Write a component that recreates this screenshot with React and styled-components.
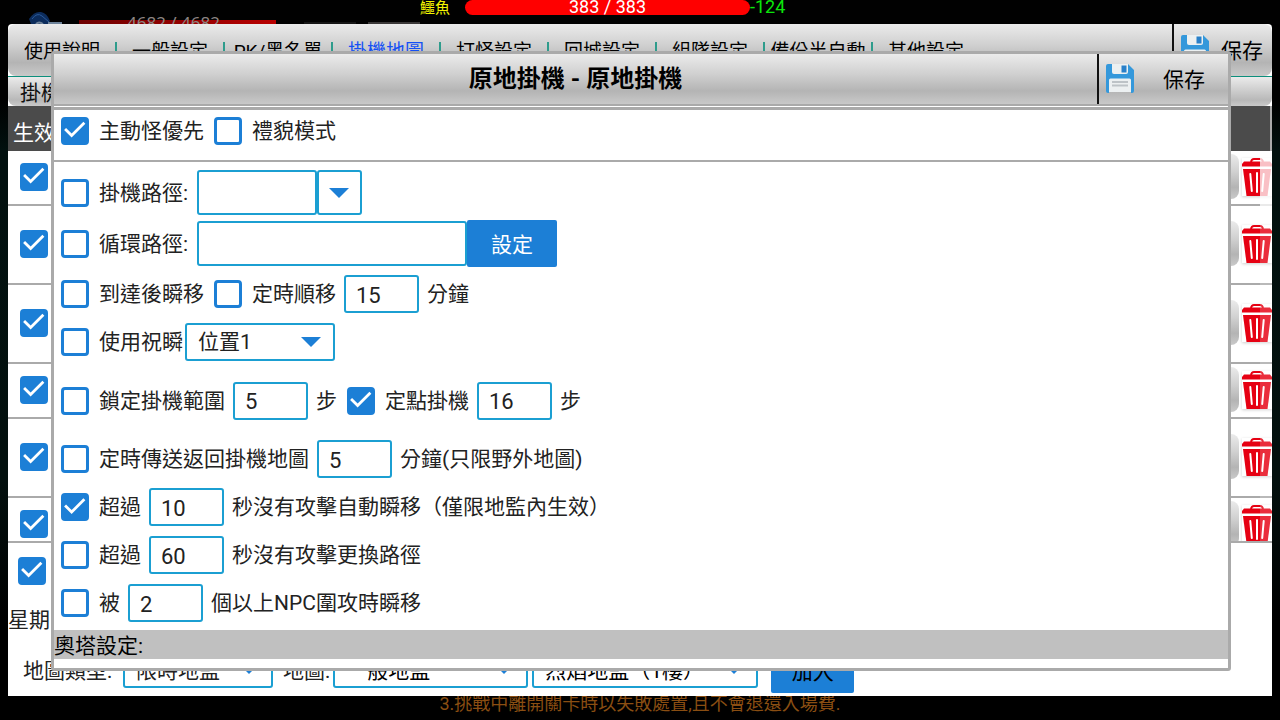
import React from "react";
import styled, { createGlobalStyle, css } from "styled-components";

const BLUE = "#1c7fd6";
const FIELD = "#1b9fd2";
const RULE = "#aaaaaa";
const METAL =
  "linear-gradient(180deg, #ebebeb 0%, #d0d0d0 40%, #b4b4b4 74%, #c9c9c9 100%)";

const GlobalStyle = createGlobalStyle`
  * { box-sizing: border-box; }
  body {
    margin: 0;
    background: #000;
    font-family: Roboto, "Noto Sans CJK TC", sans-serif;
    font-size: 21px;
    line-height: 28px;
    color: #222;
  }
  button, input, select { font: inherit; color: inherit; margin: 0; }
`;

const Page = styled.div`
  position: relative;
  min-height: 100vh;
  padding: 0 8px;
  overflow: hidden;
  background: linear-gradient(180deg, #000 100px, #02110f 150px, #03100e 480px, #000 620px);
`;

/* ---------- game HUD behind the window ---------- */
const Hud = styled.div`
  display: flex;
  height: 24px;
  margin: 0 -8px;
  padding-left: 28px;
  overflow: hidden;
  white-space: nowrap;
  background: #010101;
`;

const Crest = styled.svg`
  flex: none;
  width: 40px;
  height: 24px;
  margin-right: 11px;
`;

const PlayerGauge = styled.div`
  flex: none;
  width: 197px;
  height: 48px;
  padding-right: 8px;
  text-align: center;
  font: 17px/46px "Noto Sans", sans-serif;
  color: #8d8583;
  background: linear-gradient(90deg, #6e0000, #b80000) 0 20px no-repeat;
`;

const HudSlot = styled.div`
  flex: none;
  width: 52px;
  height: 2px;
  margin: 22px 0 0 ${(p) => p.$gap}px;
  background: ${(p) => p.$tone};
`;

const FoeName = styled.div`
  flex: none;
  width: 45px;
  font-size: 15px;
  line-height: 16px;
  color: #f4f400;
`;

const FoeGauge = styled.div`
  flex: none;
  width: 285px;
  height: 15px;
  border-radius: 8px;
  background: #f00;
  color: #fff;
  font-size: 18px;
  line-height: 14px;
  text-align: center;
`;

const Damage = styled.div`
  font-size: 18px;
  line-height: 14px;
  color: #0be60b;
`;

const Hint = styled.p`
  margin: 0;
  text-align: center;
  white-space: nowrap;
  font-size: 18px;
  line-height: 16px;
  color: #8a4e12;
`;

/* ---------- settings window ---------- */
const Window = styled.main`
  position: relative;
  z-index: 1;
  background: #fff;
  border-radius: 4px 4px 0 0;
`;

const NavBar = styled.nav`
  display: flex;
  height: 52px;
  padding-left: 1px;
  background: ${METAL};
  border-radius: 8px;
`;

const Tab = styled.button`
  flex: none;
  width: 108px;
  padding: 0;
  border: 0;
  border-right: 2px solid ${(p) => (p.$last ? "transparent" : "#2f9c8c")};
  height: 20px;
  margin-top: 18px;
  background: none;
  font-size: 19px;
  line-height: 16px;
  white-space: nowrap;
  color: ${(p) => (p.$active ? "#1450f5" : "#000")};
`;

const SaveButton = styled.button`
  display: flex;
  align-items: center;
  flex: none;
  gap: ${(p) => p.$gap}px;
  width: ${(p) => p.$width}px;
  margin-left: auto;
  padding: 0 0 0 7px;
  border: 0;
  border-left: 2px solid #111;
  background: none;
  color: #000;

  span {
    padding-top: 2px;
  }
  svg {
    margin-bottom: 2px;
  }
`;

const SubBar = styled.div`
  height: 30px;
  padding: 2px 12px 0;
  border-top: 1px solid #0c8f7c;
  color: #111;
  background: linear-gradient(180deg, #ebebeb, #b8b8b8 80%, #c9c9c9);
  border-radius: 0 0 8px 8px;
`;

const ListViewport = styled.div`
  position: relative;
  height: 437px;
  overflow: hidden;
  border-bottom: 2px solid ${RULE};
`;

const List = styled.table`
  width: 100%;
  border-spacing: 0;
`;

const HeadCell = styled.th`
  height: 45px;
  padding: 8px 5px 0;
  background: #4b4b4b;
  border-right: ${(p) => (p.$last ? `2px solid ${RULE}` : "0")};
  color: #fff;
  font-weight: 400;
  text-align: left;
`;

const Cell = styled.td`
  height: ${(p) => p.$height}px;
  padding: 0 0 2px 12px;
  border-bottom: 2px solid ${RULE};
`;

const Actions = styled.div`
  display: flex;
  justify-content: flex-end;
  align-items: center;
  gap: 3px;
`;

const EditButton = styled.button`
  width: 80px;
  height: 45px;
  border: 0;
  border-radius: 8px;
  background: ${METAL};
`;

const DeleteButton = styled.button`
  display: block;
  width: 30px;
  height: 38px;
  padding: 0;
  border: 0;
  background: #fff;
  box-shadow: 0 1px 3px #ccc;
`;

const ScrollTrack = styled.div`
  position: absolute;
  top: 45px;
  right: 0;
  bottom: 0;
  width: 12px;
  background: rgba(255, 255, 255, 0.18);
`;

const ScrollThumb = styled.div`
  height: 55px;
  background: rgba(255, 255, 255, 0.7);
`;

const BottomRow = styled.div`
  display: flex;
  align-items: center;
  height: ${(p) => p.$height}px;
  padding-left: ${(p) => p.$indent || 0}px;
`;

/* ---------- form controls ---------- */
const Check = styled.input.attrs({ type: "checkbox" })`
  appearance: none;
  flex: none;
  display: block;
  width: 28px;
  height: 28px;
  border: 3px solid ${BLUE};
  border-radius: 4px;
  background: #fff;

  label + & {
    margin-left: 2px;
  }
  &:checked {
    background: ${BLUE};
  }
  &:checked::before {
    content: "";
    display: block;
    width: 28px;
    height: 28px;
    margin: -3px;
    background: #fff;
    clip-path: polygon(11% 48%, 18% 41%, 38% 61%, 80% 19%, 87% 26%, 38% 75%);
  }
`;

const CheckLabel = styled.label`
  margin: 0 ${(p) => (p.$tight ? 2 : 8)}px 0 10px;
  white-space: nowrap;
`;

const MapLabel = styled.span`
  padding-top: 4px;
  margin: 0 ${(p) => p.$after}px 0 10px;
  white-space: nowrap;
`;

const Note = styled.span`
  margin: 0 10px 0 8px;
  white-space: nowrap;
`;

const fieldBox = css`
  border: 2px solid ${FIELD};
  border-radius: 3px;
  background: #fff;
`;

const TextField = styled.input.attrs({ type: "text" })`
  ${fieldBox}
  flex: none;
  width: ${(p) => p.$width || 75}px;
  height: ${(p) => (p.$tall ? 45 : 38)}px;
  padding: 2px 10px 0;
  font-size: 22px;
`;

const SelectWrap = styled.span`
  position: relative;
  flex: none;
  width: ${(p) => p.$width}px;
  margin-right: ${(p) => p.$after || 0}px;

  svg {
    position: absolute;
    right: 14px;
    top: 14px;
    pointer-events: none;
  }
`;

const SelectBox = styled.select`
  ${fieldBox}
  appearance: none;
  display: block;
  width: 100%;
  height: 38px;
  padding: ${(p) => (p.$low ? 4 : 0)}px 11px 0;
  color: ${(p) => (p.$dark ? "#000" : "#222")};
`;

const DropButton = styled.button`
  ${fieldBox}
  display: grid;
  place-items: center;
  width: 45px;
  height: 45px;
  padding: 0 2px 0 0;
`;

const BlueButton = styled.button`
  width: ${(p) => p.$width}px;
  height: 47px;
  padding: ${(p) => (p.$dark ? 6 : 2)}px 0 0;
  border: 0;
  border-radius: 2px;
  background: ${BLUE};
  color: ${(p) => (p.$dark ? "#000" : "#fff")};
`;

/* ---------- dialog ---------- */
const Dialog = styled.section`
  position: absolute;
  z-index: 2;
  top: 51px;
  left: 51px;
  right: 49px;
  border: 3px solid ${RULE};
  border-radius: 3px;
  background: #fff;
`;

const DialogHead = styled.header`
  display: flex;
  height: 52px;
  border-bottom: 2px solid ${RULE};
  background: ${METAL};
`;

const Title = styled.h1`
  flex: 1;
  margin: 0;
  text-align: center;
  font-size: 24px;
  line-height: 50px;
  font-weight: 700;
  color: #000;
`;

const ModeRow = styled.div`
  display: flex;
  align-items: center;
  height: 55px;
  margin-top: 1px;
  padding: 0 7px 9px;
  border-top: 3px solid ${RULE};
  border-bottom: 2px solid ${RULE};
`;

const Options = styled.div`
  padding: 6px 7px 3px;
`;

const Option = styled.div`
  display: flex;
  align-items: center;
  height: ${(p) => p.$height || 48}px;
`;

const PathOption = styled(Option)`
  ${TextField} {
    margin-left: 1px;
  }
`;

const SectionBar = styled.h2`
  margin: 0 0 9px;
  padding: 2px 0 0;
  height: 29px;
  background: #c0c0c0;
  font-size: 21px;
  font-weight: 400;
  line-height: 28px;
  color: #000;
`;

const Arrow = () => (
  <svg width="20" height="10" viewBox="0 0 20 10" aria-hidden="true">
    <path d="M0 0H20L10 10Z" fill={BLUE} />
  </svg>
);

const Floppy = () => (
  <svg width="28" height="29" viewBox="0 0 28 29" aria-hidden="true">
    <path d="M2 0H22L28 6V27Q28 29 26 29H25V27H3V29H2Q0 29 0 27V2Q0 0 2 0Z" fill="#3498db" />
    <path d="M6 0H22V8Q22 10 20 10H8Q6 10 6 8Z" fill="#ecf0f1" />
    <path d="M15.5 1.5H20.5V8.5H15.5Z" fill="#2980c9" />
    <path d="M3 16Q3 14.500 4.500 14.500H23.500Q25 14.500 25 16V28H3Z" fill="#ecf0f1" />
    <path d="M6 17H22V19H6ZM6 20.500H22V22.500H6Z" fill="#bdc3c7" />
  </svg>
);

const Trash = () => (
  <svg width="30" height="38" viewBox="0 0 30 38" aria-hidden="true">
    <path d="M9 4Q9.500 1 12 1H18Q20.500 1 21 4" fill="none" stroke="#e60012" strokeWidth="2" />
    <path d="M2 3.500H28L30 6V8.500H0V6Z" fill="#e60012" />
    <path d="M1 11H29L25.500 38H4.500Z" fill="#e60012" />
    <path d="M8.300 16L9.800 33M15 15V34M21.700 16L20.200 33" stroke="#fff" strokeWidth="2" strokeLinecap="round" />
  </svg>
);

const Select = ({ width, value, label, dark, low, after }) => (
  <SelectWrap $width={width} $after={after}>
    <SelectBox aria-label={label} $dark={dark} $low={low} defaultValue={value}>
      <option>{value}</option>
    </SelectBox>
    <Arrow />
  </SelectWrap>
);

const CheckOption = ({ id, checked, tight, children }) => (
  <>
    <Check id={id} defaultChecked={checked} />
    <CheckLabel htmlFor={id} $tight={tight}>{children}</CheckLabel>
  </>
);

const TABS = [
  "使用說明", "一般設定", "PK/黑名單", "掛機地圖", "打怪設定",
  "回城設定", "組隊設定", "備份半自動", "其他設定",
];
const ROW_HEIGHTS = [55, 79, 79, 55, 79, 55];

export default function App() {
  return (
    <Page>
      <GlobalStyle />
      <Hud>
        <Crest viewBox="0 0 40 24" aria-hidden="true">
          <path d="M1 19Q6 11 13 12Q19 13 22 21L20 24H3Z" fill="#0c2c5c" />
          <path d="M4 19Q9 12 14 16L21 22" fill="none" stroke="#2a5a9a" strokeWidth="1" />
          <path d="M8 24Q11 21 15 24M20 23H34" stroke="#6d8299" strokeWidth="2" fill="none" />
        </Crest>
        <PlayerGauge>4682 / 4682</PlayerGauge>
        <HudSlot $gap={28} $tone="#161616" />
        <HudSlot $gap={12} $tone="#3a3838" />
        <FoeName>鱷魚</FoeName>
        <FoeGauge>383 / 383</FoeGauge>
        <Damage>-124</Damage>
      </Hud>

      <Window>
        <NavBar>
          {TABS.map((name, i) => (
            <Tab key={name} $active={i === 3} $last={i === TABS.length - 1}>{name}</Tab>
          ))}
          <SaveButton $width={100} $gap={12}><Floppy /><span>保存</span></SaveButton>
        </NavBar>
        <SubBar>掛機</SubBar>
        <ListViewport>
          <List>
            <thead>
              <tr>
                <HeadCell>生效</HeadCell>
                <HeadCell $last aria-label="操作" />
              </tr>
            </thead>
            <tbody>
              {ROW_HEIGHTS.map((h, i) => (
                <tr key={i}>
                  <Cell $height={h}><Check aria-label="生效" defaultChecked /></Cell>
                  <Cell $height={h}>
                    <Actions>
                      <EditButton aria-label="編輯" />
                      <DeleteButton aria-label="刪除"><Trash /></DeleteButton>
                    </Actions>
                  </Cell>
                </tr>
              ))}
            </tbody>
          </List>
          <ScrollTrack><ScrollThumb /></ScrollTrack>
        </ListViewport>
        <BottomRow $height={55} $indent={10}>
          <Check aria-label="啟用" defaultChecked />
        </BottomRow>
        <BottomRow $height={44}>星期</BottomRow>
        <BottomRow $height={54} $indent={5}>
          <MapLabel $after={11}>地圖類型:</MapLabel>
          <Select width={150} value="限時地監" label="地圖類型" low />
          <MapLabel $after={3}>地圖:</MapLabel>
          <Select width={195} value="一般地監" label="地圖" dark low after={4} />
          <Select width={226} value="烈焰地監（1樓）" label="樓層" dark low after={13} />
          <BlueButton $width={83} $dark>加入</BlueButton>
        </BottomRow>
      </Window>

      <Hint>3.挑戰中離開關卡時以失敗處置,且不會退還入場費.</Hint>

      <Dialog role="dialog" aria-labelledby="dialog-title">
        <DialogHead>
          <Title id="dialog-title">原地掛機 - 原地掛機</Title>
          <SaveButton $width={131} $gap={29}><Floppy /><span>保存</span></SaveButton>
        </DialogHead>
        <ModeRow>
          <CheckOption id="aggro" checked>主動怪優先</CheckOption>
          <CheckOption id="polite">禮貌模式</CheckOption>
        </ModeRow>
        <Options>
          <PathOption $height={49}>
            <CheckOption id="path">掛機路徑:</CheckOption>
            <TextField $width={120} $tall aria-label="掛機路徑" />
            <DropButton aria-label="選擇路徑"><Arrow /></DropButton>
          </PathOption>
          <PathOption $height={53}>
            <CheckOption id="loop">循環路徑:</CheckOption>
            <TextField $width={270} $tall aria-label="循環路徑" />
            <BlueButton $width={90}>設定</BlueButton>
          </PathOption>
          <Option>
            <CheckOption id="arrive">到達後瞬移</CheckOption>
            <CheckOption id="timed">定時順移</CheckOption>
            <TextField defaultValue="15" aria-label="定時順移" />
            <Note>分鐘</Note>
          </Option>
          <Option>
            <CheckOption id="bless" tight>使用祝瞬</CheckOption>
            <Select width={150} value="位置1" label="位置" />
          </Option>
          <Option $height={69}>
            <CheckOption id="range">鎖定掛機範圍</CheckOption>
            <TextField defaultValue="5" aria-label="鎖定掛機範圍" />
            <Note>步</Note>
            <CheckOption id="spot" checked>定點掛機</CheckOption>
            <TextField defaultValue="16" aria-label="定點掛機" />
            <Note>步</Note>
          </Option>
          <Option>
            <CheckOption id="return">定時傳送返回掛機地圖</CheckOption>
            <TextField defaultValue="5" aria-label="定時傳送返回掛機地圖" />
            <Note>分鐘(只限野外地圖)</Note>
          </Option>
          <Option>
            <CheckOption id="idle-blink" checked>超過</CheckOption>
            <TextField defaultValue="10" aria-label="秒數" />
            <Note>秒沒有攻擊自動瞬移（僅限地監內生效）</Note>
          </Option>
          <Option>
            <CheckOption id="idle-path">超過</CheckOption>
            <TextField defaultValue="60" aria-label="秒數" />
            <Note>秒沒有攻擊更換路徑</Note>
          </Option>
          <Option>
            <CheckOption id="mobbed">被</CheckOption>
            <TextField defaultValue="2" aria-label="數量" />
            <Note>個以上NPC圍攻時瞬移</Note>
          </Option>
        </Options>
        <SectionBar>奧塔設定:</SectionBar>
      </Dialog>
    </Page>
  );
}
